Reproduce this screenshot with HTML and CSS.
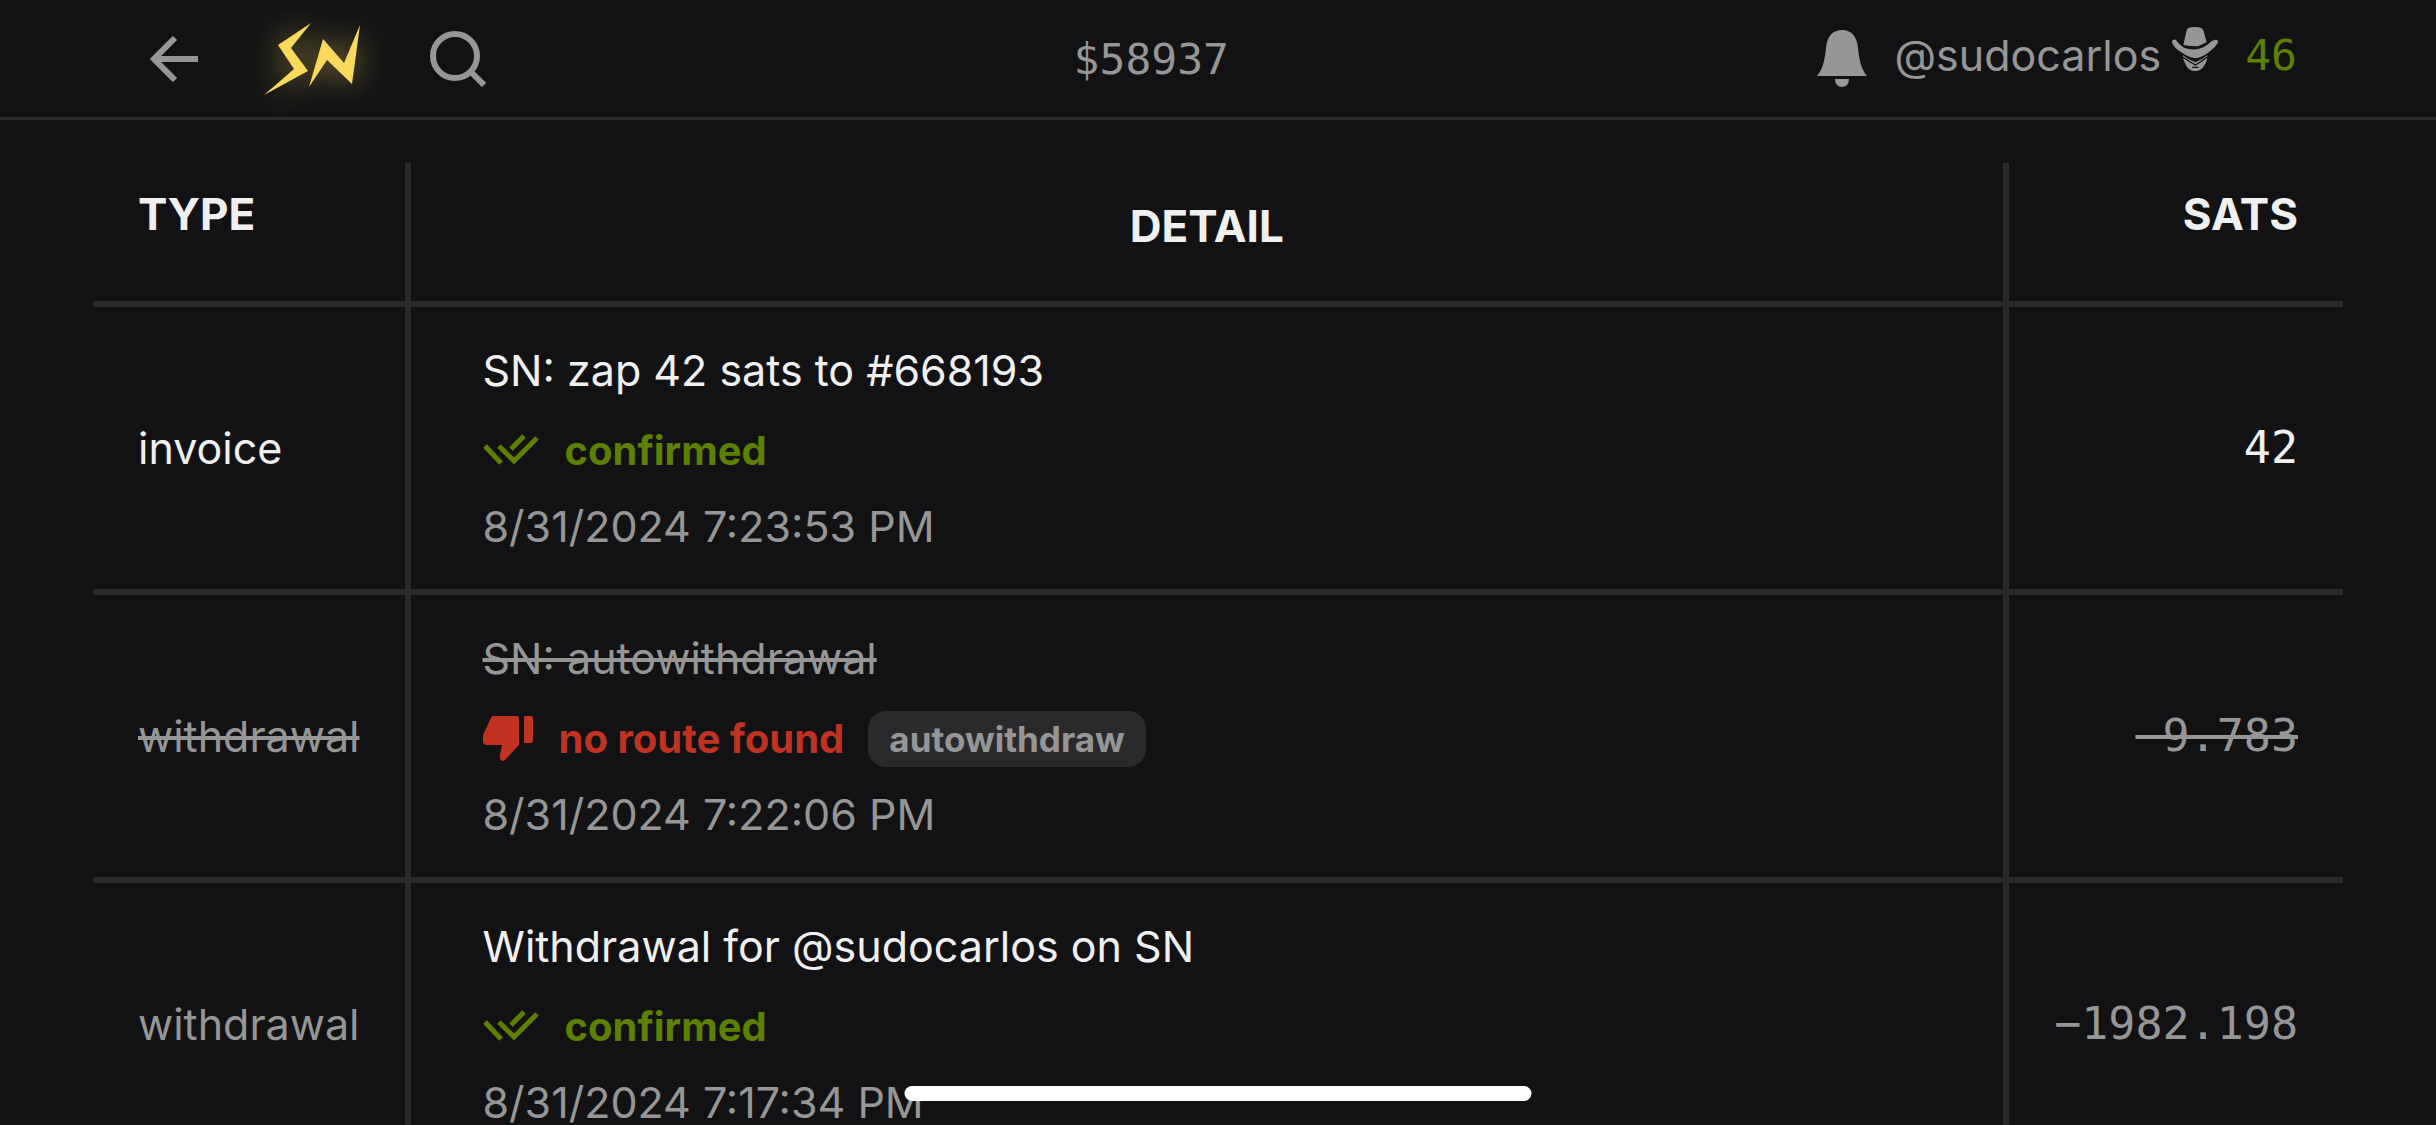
FILE: index.html
```html
<!DOCTYPE html>
<html lang="en">
<head>
	<meta charset="UTF-8">
	<title>satistics</title>
	<link rel="stylesheet" href="styles.css">
</head>
<body>

<header class="navbar">
	<div class="nav-left">
		<button class="icon-btn" type="button" aria-label="back">
			<svg width="48" height="46" viewBox="0 0 48 46"><path d="M4 23H48M25 2L4 23L25 44" fill="none" stroke="#969696" stroke-width="6"/></svg>
		</button>
		<a class="brand" href="#" aria-label="home">
			<svg width="96" height="72" viewBox="0 0 96 72"><path d="M47 0L14 22L30 46L0 72L44 48L27 25ZM59 16L45 64L63 37L88 61L96 2L80 40Z" fill="#fada5e"/></svg>
		</a>
		<button class="icon-btn" type="button" aria-label="search">
			<svg width="56" height="56" viewBox="0 0 56 56"><circle cx="25" cy="25" r="22" fill="none" stroke="#969696" stroke-width="6"/><path d="M40 40L54 54" stroke="#969696" stroke-width="6"/></svg>
		</button>
	</div>
	<span class="price">$58937</span>
	<div class="nav-right">
		<a class="bell" href="#" aria-label="notifications">
			<svg width="50" height="58" viewBox="0 0 50 58"><path d="M0 46C6 39 8 29 9 18C10 6 16 0 25 0S40 6 41 18C42 29 44 39 50 46ZM18 49H32C32 54 29 57 25 57S18 54 18 49Z" fill="#969696"/></svg>
		</a>
		<div class="profile">
			<a class="user" href="#">@sudocarlos</a>
			<svg class="hat" width="46" height="44" viewBox="0 0 138 132">
				<path d="M34 54L44 10Q46 0 68 0T94 10L104 46Q92 52 78 58Q54 58 34 54Z" fill="#969696"/>
				<path d="M0 46Q0 36 11 38Q22 54 36 62Q58 70 78 66Q94 64 108 52Q118 42 126 39Q138 36 138 46Q130 62 112 74Q90 92 70 94Q50 92 28 76Q6 64 0 46Z" fill="#969696"/>
				<path d="M32 84Q50 100 70 106Q92 98 106 84Q107 100 100 110Q90 132 69 132T40 110Q31 98 32 84Z" fill="#969696"/>
				<path d="M32 90Q52 104 70 114Q88 104 106 90M60 121H80" fill="none" stroke="#121214" stroke-width="4"/>
			</svg>
			<a class="sats" href="#">46</a>
		</div>
	</div>
</header>

<main>
	<table class="history">
		<thead>
			<tr>
				<th class="type">TYPE</th>
				<th class="detail">DETAIL</th>
				<th class="amount">SATS</th>
			</tr>
		</thead>
		<tbody>
			<tr>
				<td class="type">invoice</td>
				<td class="detail">
					<div class="lines">
						<div>SN: zap 42 sats to #668193</div>
						<div class="status confirmed">
							<svg width="56" height="40" viewBox="0 0 56 40"><path d="M2 15L18 32M16 15L31 30L54 7M28 18L41 5" fill="none" stroke="#5c8001" stroke-width="5"/></svg>
							<span>confirmed</span>
						</div>
						<time class="muted">8/31/2024 7:23:53 PM</time>
					</div>
				</td>
				<td class="amount">42</td>
			</tr>
			<tr class="failed">
				<td class="type"><s>withdrawal</s></td>
				<td class="detail">
					<div class="lines">
						<div><s>SN: autowithdrawal</s></div>
						<div class="status error">
							<svg width="50" height="46" viewBox="0 0 50 46"><path d="M10 0H34Q36 0 36 2V29L22 44Q20 46 18 44Q16 42 17 39L19 29H4Q0 29 0 25V19L8 2Q9 0 10 0ZM41 0H48Q50 0 50 2V25Q50 27 48 27H41Z" fill="#c03221"/></svg>
							<span>no route found</span>
							<span class="badge">autowithdraw</span>
						</div>
						<time class="muted">8/31/2024 7:22:06 PM</time>
					</div>
				</td>
				<td class="amount"><s>&minus;9.783</s></td>
			</tr>
			<tr>
				<td class="type muted">withdrawal</td>
				<td class="detail">
					<div class="lines">
						<div>Withdrawal for @sudocarlos on SN</div>
						<div class="status confirmed">
							<svg width="56" height="40" viewBox="0 0 56 40"><path d="M2 15L18 32M16 15L31 30L54 7M28 18L41 5" fill="none" stroke="#5c8001" stroke-width="5"/></svg>
							<span>confirmed</span>
						</div>
						<time class="muted">8/31/2024 7:17:34 PM</time>
					</div>
				</td>
				<td class="amount muted">&minus;1982.198</td>
			</tr>
		</tbody>
	</table>
</main>

<div class="home-bar"></div>

</body>
</html>
```

FILE: styles.css
```css
*{
	box-sizing: border-box;
}
body{
	margin: 0;
	height: 100vh;
	overflow: hidden;
	background: #121214;
	color: #f0f0f0;
	font-family: Inter, "Liberation Sans", sans-serif;
	font-size: 43px;
	line-height: 66px;
}
a{
	color: inherit;
	text-decoration: none;
}
svg{
	display: block;
	flex: none;
}

/* top bar */
.navbar{
	display: flex;
	justify-content: space-between;
	align-items: center;
	height: 120px;
	padding: 0 139px 0 150px;
	border-bottom: 3px solid #2a2a2c;
	color: #969696;
}
.nav-left, .nav-right, .profile{
	display: flex;
	align-items: center;
}
.icon-btn{
	padding: 0;
	border: 0;
	background: none;
}
.brand{
	margin: 0 70px 0 66px;
}
.brand svg{
	overflow: visible;
	filter: drop-shadow(0 0 16px rgba(250, 218, 94, 0.6));
}
.price, .sats, .amount{
	font-family: "DejaVu Sans Mono", monospace;
}
.profile{
	margin-left: 28px;
	padding-bottom: 8px;
}
.hat{
	margin: 0 27px 12px 11px;
}
.sats{
	color: #5c8001;
}

/* wallet history */
main{
	padding: 43px 93px 0;
}
.history{
	width: 100%;
	border-spacing: 0;
}
th, td{
	padding: 30px 45px;
	border-bottom: 6px solid #2a2a2c;
	white-space: nowrap;
	text-align: left;
}
th{
	padding: 18px 45px 54px;
	vertical-align: top;
	font-size: 44px;
	font-weight: 700;
}
.detail{
	width: 100%;
	padding-left: 72px;
	border-left: 6px solid #2a2a2c;
	border-right: 6px solid #2a2a2c;
}
th.detail{
	padding: 30px 45px 42px;
	text-align: center;
}
.amount{
	text-align: right;
}
td.amount{
	font-size: 45px;
}
th.amount{
	font-family: inherit;
}
.lines{
	display: flex;
	flex-direction: column;
	gap: 12px;
}
.status{
	display: flex;
	align-items: center;
	padding-top: 6px;
	font-size: 40px;
	line-height: 60px;
	font-weight: 700;
}
.status svg{
	margin-right: 26px;
}
.confirmed{
	color: #5c8001;
}
.error{
	color: #c03221;
}
.badge{
	margin-left: 24px;
	padding: 0 21px;
	border-radius: 18px;
	background: #2a2a2c;
	color: #969696;
	font-size: 35px;
	line-height: 56px;
}
.muted, .failed{
	color: #969696;
}

.home-bar{
	position: fixed;
	left: 50%;
	bottom: 24px;
	width: 627px;
	height: 15px;
	transform: translateX(-50%);
	border-radius: 8px;
	background: #fff;
}
```
